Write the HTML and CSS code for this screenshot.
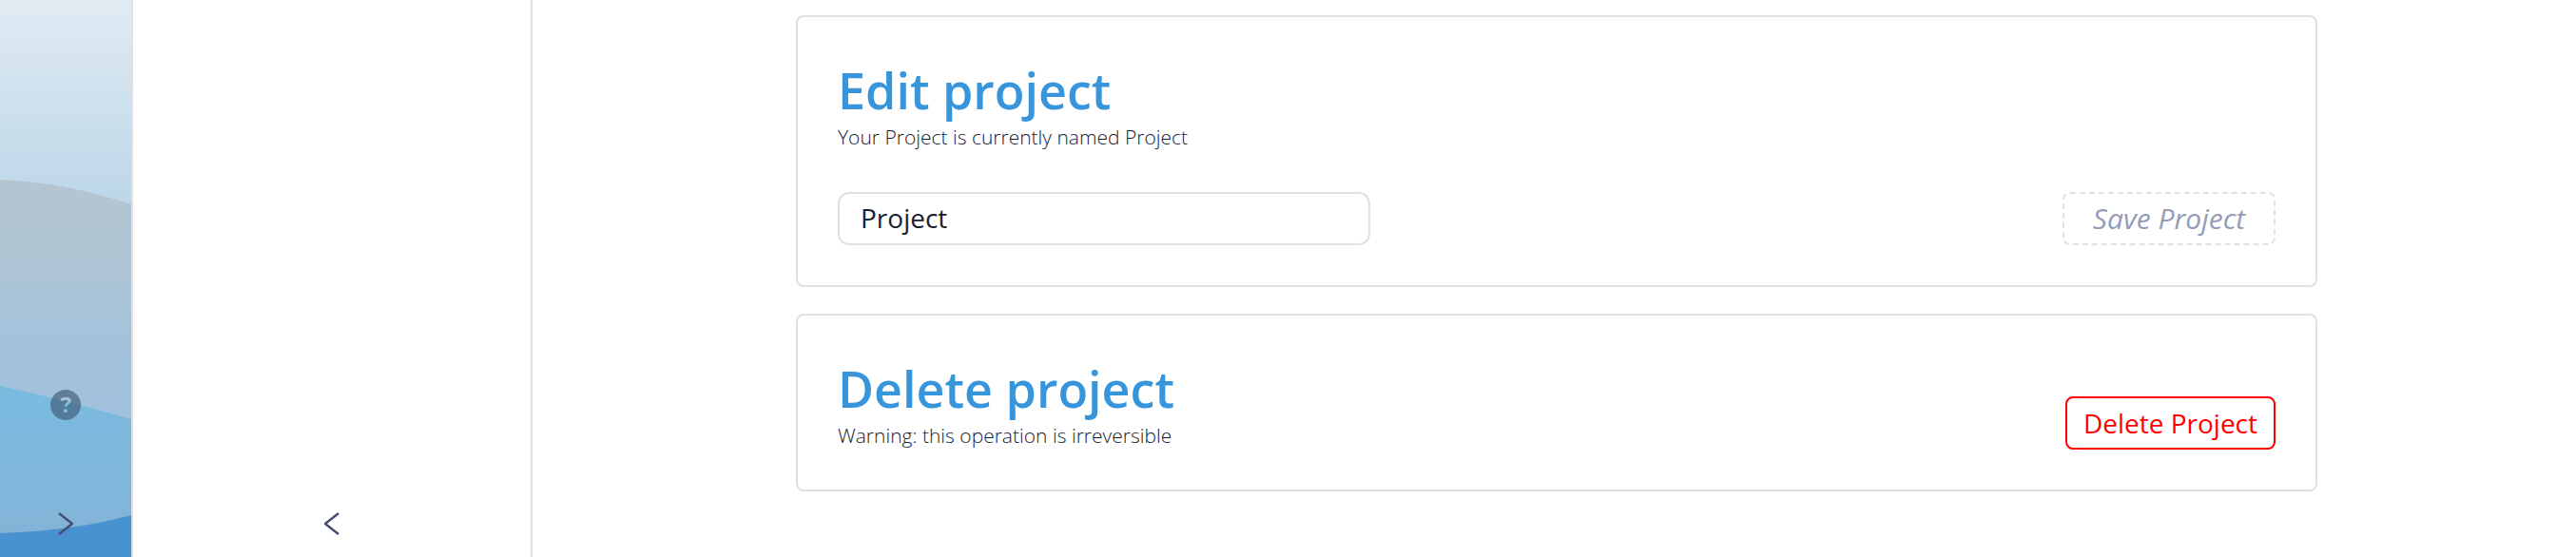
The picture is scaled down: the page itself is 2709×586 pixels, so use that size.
FILE: index.html
```html
<!DOCTYPE html>
<html lang="en">
<head>
<meta charset="utf-8">
<title>Project settings</title>
<link rel="stylesheet" href="styles.css">
</head>
<body>
<div class="app">
  <nav class="rail" aria-label="Main">
    <svg class="rail-art" viewBox="0 0 138 586" preserveAspectRatio="none" aria-hidden="true">
      <defs>
        <linearGradient id="sky" x1="0" y1="0" x2="0" y2="1"><stop offset="0" stop-color="#e1ebf3"/><stop offset="1" stop-color="#bbd6e8"/></linearGradient>
        <linearGradient id="far" x1="0" y1="0" x2="0" y2="1"><stop offset="0" stop-color="#b4c5d0"/><stop offset="0.3" stop-color="#afc5d4"/><stop offset="0.6" stop-color="#a5c3da"/><stop offset="1" stop-color="#a0c1dd"/></linearGradient>
        <linearGradient id="mid" x1="0" y1="0" x2="0" y2="1"><stop offset="0" stop-color="#7bbadf"/><stop offset="0.3" stop-color="#7cb8dd"/><stop offset="1" stop-color="#83b4d7"/></linearGradient>
      </defs>
      <rect width="138" height="220" fill="url(#sky)"/>
      <path d="M0 189Q69 192 138 215V445H0Z" fill="url(#far)"/>
      <path d="M0 406Q69 421 138 441V565H0Z" fill="url(#mid)"/>
      <path d="M0 561Q80 558 138 542V586H0Z" fill="#4893cf"/>
    </svg>
    <button class="icon-button" type="button" aria-label="Help">
      <svg width="32" height="32" viewBox="0 0 32 32" fill="none" aria-hidden="true">
        <mask id="help-mask">
          <circle cx="16" cy="16" r="16" fill="#fff"/>
          <path d="M11.300 11.500C12.500 9.700 14.300 9.300 16 9.300C18.800 9.300 20.200 10.300 20.200 12C20.200 14.800 16 14.200 16 17.800" stroke="#000" stroke-width="3"/>
          <circle cx="16" cy="22.200" r="2.100" fill="#000"/>
        </mask>
        <rect width="32" height="32" fill="#3a546c" fill-opacity=".62" mask="url(#help-mask)"/>
      </svg>
    </button>
    <button class="icon-button" type="button" aria-label="Expand menu">
      <svg width="16" height="24" viewBox="0 0 16 24" fill="none" stroke="#474c70" stroke-width="2.400" aria-hidden="true"><path d="M1 1L15 12L1 23"/></svg>
    </button>
  </nav>
  <aside class="panel" aria-label="Section">
    <button class="icon-button" type="button" aria-label="Collapse panel">
      <svg width="16" height="24" viewBox="0 0 16 24" fill="none" stroke="#434c6e" stroke-width="2.400" aria-hidden="true"><path d="M15 1L1 12L15 23"/></svg>
    </button>
  </aside>
  <main class="content">
    <section class="card">
      <h2 class="card-title">Edit project</h2>
      <p class="card-note"><label for="project-name">Your Project is currently named Project</label></p>
      <form class="edit-row">
        <input class="field" id="project-name" type="text" value="Project">
        <button class="button button-save" type="submit" disabled>Save Project</button>
      </form>
    </section>
    <section class="card card-delete">
      <div>
        <h2 class="card-title">Delete project</h2>
        <p class="card-note">Warning: this operation is irreversible</p>
      </div>
      <button class="button button-delete" type="button">Delete Project</button>
    </section>
  </main>
</div>
</body>
</html>
```
FILE: styles.css
```css
* { box-sizing: border-box; }

body {
  margin: 0;
  background: #fff;
  color: #172135;
  font-family: "Open Sans", "Noto Sans", sans-serif;
  font-size: 28px;
}

.app { display: flex; min-height: 100vh; }

.rail,
.panel {
  display: flex;
  flex: none;
  flex-direction: column;
  align-items: center;
  justify-content: flex-end;
  padding-bottom: 23px;
  border-right: 2px solid #e0e0e8;
}

.rail {
  position: relative;
  gap: 97px;
  width: 140px;
}

.panel { width: 420px; }

.rail-art {
  position: absolute;
  inset: 0;
  width: 100%;
  height: 100%;
}

.icon-button {
  position: relative;
  display: flex;
  padding: 0;
  border: 0;
  background: none;
  cursor: pointer;
}

.content {
  display: flex;
  flex: 1;
  flex-direction: column;
  align-items: center;
  gap: 28px;
  padding: 16px 0 16px 5px;
}

.card {
  width: 100%;
  max-width: 1600px;
  padding: 42px;
  border: 2px solid #e0e0e8;
  border-radius: 8px;
}

.card-delete {
  display: flex;
  align-items: flex-end;
  justify-content: space-between;
}

.card-title {
  margin: 0;
  color: #3795db;
  font-size: 52px;
  font-weight: 600;
  line-height: 69px;
}

.card-note {
  margin: 0;
  font-size: 21px;
  font-weight: 300;
  line-height: 30px;
}

.edit-row {
  display: flex;
  justify-content: space-between;
  margin-top: 43px;
}

.field {
  width: 560px;
  height: 56px;
  padding: 0 22px 2px;
  border: 2px solid #e0e0e8;
  border-radius: 12px;
  background: #fff;
  color: inherit;
  font: inherit;
}

.button {
  height: 56px;
  padding: 0 17px;
  border-radius: 8px;
  background: #fff;
  font: inherit;
}

.button-save {
  min-width: 224px;
  padding-bottom: 2px;
  border: 2px dashed #e0e0e8;
  color: #949cba;
  font-size: 30px;
  font-style: italic;
}

.button-delete {
  border: 2px solid #f00;
  color: #f00;
}
```
